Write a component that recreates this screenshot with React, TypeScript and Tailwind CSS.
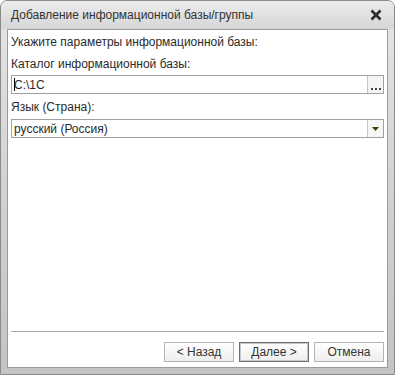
import React from "react";

export default function App() {
  const font = { fontFamily: '"Liberation Sans", Arial, sans-serif' };
  return (
    <div className="w-[395px] h-[375px] bg-white" style={font}>
      <div className="w-[395px] h-[375px] flex flex-col rounded-t-[7px] border border-[#8a8a8a] bg-gradient-to-b from-[#e6e6e6] via-[#d2d2d2] to-[#c4c4c4] overflow-hidden">
        <div className="h-[28px] flex items-center pl-[10px] pr-[9px] shrink-0 bg-gradient-to-b from-[#ececec] to-[#d6d6d6]">
          <span className="text-[12px] text-[#333] flex-1">Добавление информационной базы/группы</span>
          <svg width="12" height="12" viewBox="0 0 12 12" className="mr-[3px]">
            <path d="M1.5 1.5 L10.5 10.5 M10.5 1.5 L1.5 10.5" stroke="#2b2b2b" strokeWidth="2.6" />
          </svg>
        </div>
        <div className="flex-1 mx-[6px] mb-[6px] bg-white border border-[#9a9a9a] flex flex-col px-[3px] text-[12px] text-[#2a2a2a]">
          <div className="mt-[5px] leading-[14px]">Укажите параметры информационной базы:</div>
          <div className="mt-[8px] leading-[14px]">Каталог информационной базы:</div>
          <div className="mt-[4px] h-[19px] flex border border-[#a0a0a0]">
            <div className="flex-1 flex items-center pl-[2px] leading-[14px]">
              <span className="w-px h-[13px] bg-black mr-[-1px]" />
              <span>C:\1C</span>
            </div>
            <div className="w-[16px] border-l border-[#c4c4c4] bg-[#f4f4f4] flex items-end justify-center pb-[3px] gap-[2px]">
              <span className="w-[2px] h-[2px] bg-[#444]" />
              <span className="w-[2px] h-[2px] bg-[#444]" />
              <span className="w-[2px] h-[2px] bg-[#444]" />
            </div>
          </div>
          <div className="mt-[6px] leading-[14px]">Язык (Страна):</div>
          <div className="mt-[5px] h-[19px] flex border border-[#a0a0a0]">
            <div className="flex-1 flex items-center pl-[2px] leading-[14px]">русский (Россия)</div>
            <div className="w-[16px] border-l border-[#c4c4c4] bg-[#f6f6f6] flex items-center justify-center">
              <svg width="7" height="4" viewBox="0 0 7 4">
                <path d="M0 0 L7 0 L3.5 4 Z" fill="#4a3c10" />
              </svg>
            </div>
          </div>
          <div className="flex-1" />
          <div className="h-px bg-[#a8a8a8]" />
          <div className="mt-[10px] mb-[5px] flex justify-end gap-[5px] text-[12px] text-[#333]">
            <button className="w-[70px] h-[20px] border border-[#b4b4b4] bg-gradient-to-b from-[#ffffff] to-[#eeeeee] flex items-center justify-center">&lt; Назад</button>
            <button className="w-[70px] h-[20px] border border-[#6e6e6e] shadow-[inset_0_0_0_1px_#c8c8c8] bg-gradient-to-b from-[#ffffff] to-[#eeeeee] flex items-center justify-center">Далее &gt;</button>
            <button className="w-[70px] h-[20px] border border-[#b4b4b4] bg-gradient-to-b from-[#ffffff] to-[#eeeeee] flex items-center justify-center">Отмена</button>
          </div>
        </div>
      </div>
    </div>
  );
}
